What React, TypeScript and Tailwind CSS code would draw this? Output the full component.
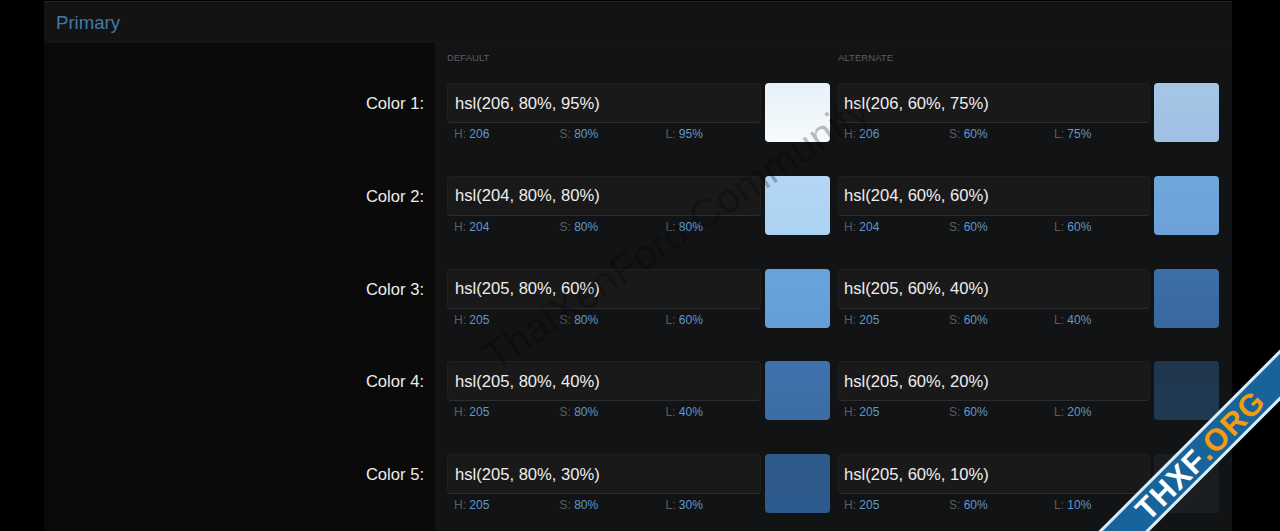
const rows = [
  { n: 1, a: [206, 80, 95], b: [206, 60, 75], ca: "from-[#e6f1f8] to-[#f8fbfd]", cb: "from-[#a6c6e6] to-[#9fc0e3]" },
  { n: 2, a: [204, 80, 80], b: [204, 60, 60], ca: "from-[#b3d7f5] to-[#aed2f1]", cb: "from-[#70a6da] to-[#6ca2d8]" },
  { n: 3, a: [205, 80, 60], b: [205, 60, 40], ca: "from-[#68a4dc] to-[#629ed8]", cb: "from-[#3d6ea6] to-[#38689e]" },
  { n: 4, a: [205, 80, 40], b: [205, 60, 20], ca: "from-[#3f72ac] to-[#3b6ca6]", cb: "from-[#20364d] to-[#1f3953]" },
  { n: 5, a: [205, 80, 30], b: [205, 60, 10], ca: "from-[#2f5a8a] to-[#2d5a8e]", cb: "from-[#1a1d20] to-[#1b1e21]" },
];

function Cell({ v, color, alt }: { v: number[]; color: string; alt?: boolean }) {
  const [h, s, l] = v;
  return (
    <div className="flex gap-1">
      <div className={alt ? "w-[312px]" : "w-[314px]"}>
        <div className={`flex h-[40px] items-center rounded-[4px] border border-[#1e1f20] border-b-[#2c2d2e] bg-[#19191a] pt-[2px] text-[16.6px] text-[#ededed] ${alt ? "pl-[5px]" : "pl-[7px]"}`}>
          {`hsl(${h}, ${s}%, ${l}%)`}
        </div>
        <div className={`mt-[4px] flex text-[12px] leading-[14px] text-[#5c5d5e] ${alt ? "pl-[6px]" : "pl-[7px]"}`}>
          <div className={alt ? "w-[105px]" : "w-[105.5px]"}>H: <span className="text-[#5f98cc]">{h}</span></div>
          <div className={alt ? "w-[105px]" : "w-[106px]"}>S: <span className="text-[#5f98cc]">{s}%</span></div>
          <div>L: <span className="text-[#5f98cc]">{l}%</span></div>
        </div>
      </div>
      <div className={`h-[59px] w-[65px] rounded-[4px] bg-gradient-to-b ${color}`} />
    </div>
  );
}

export default function App() {
  return (
    <div className="relative h-[531px] overflow-hidden bg-black pt-[1px] font-['Liberation_Sans',Arial,sans-serif]">
      <div className="ml-[44px] h-full w-[1188px] border-t border-[#232323] bg-[#0a0a0a]">
        <div className="flex h-[41px] items-center bg-[#131313] pl-3 text-[18.6px] text-[#4677a8]">Primary</div>
        <div className="flex">
          <div className="w-[391px] shrink-0 pr-[11px]">
            <div className="h-[40px]" />
            {rows.map((r) => (
              <div key={r.n} className="h-[92.75px] pt-[9px] text-right text-[16.6px] leading-[24px] text-[#ededed]">
                Color {r.n}:
              </div>
            ))}
          </div>
          <div className="h-[490px] flex-1 border-t border-[#181818] bg-[#121314] pl-3">
            <div className="flex h-[39px] pt-[8px] text-[9.6px] leading-[12px] text-[#5c5d5e]">
              <div className="w-[391px]">DEFAULT</div>
              <div>ALTERNATE</div>
            </div>
            {rows.map((r) => (
              <div key={r.n} className="flex h-[92.75px] gap-[8px]">
                <Cell v={r.a} color={r.ca} />
                <Cell v={r.b} color={r.cb} alt />
              </div>
            ))}
          </div>
        </div>
      </div>

      <div className="pointer-events-none absolute left-[436px] top-[213px] w-[480px] -rotate-[34deg] whitespace-nowrap text-center text-[41px] leading-[40px] text-black/25">
        ThaiXenForo Community
      </div>

      <div className="absolute bottom-[58px] right-[-120px] flex h-[36px] w-[400px] -rotate-45 items-center justify-center border-y-[3px] border-[#d9edf7] bg-[#17639b] text-[31px] font-bold leading-none tracking-[1px] text-white">
        THXF<span className="text-[#f39c12]">.ORG</span>
      </div>
    </div>
  );
}
